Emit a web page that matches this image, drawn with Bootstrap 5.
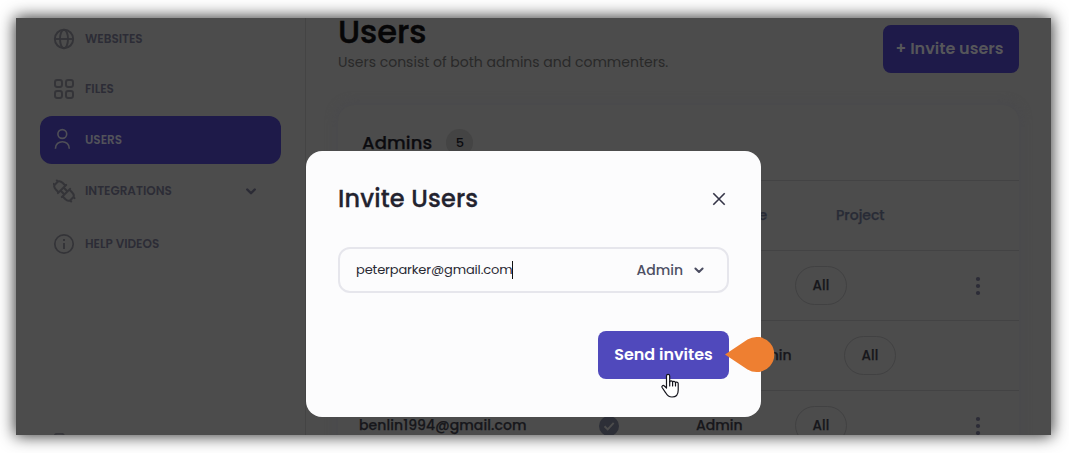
<!DOCTYPE html>
<html lang="en">
<head>
<meta charset="utf-8">
<meta name="viewport" content="width=device-width, initial-scale=1">
<title>Invite Users</title>
<link href="https://cdn.jsdelivr.net/npm/bootstrap@5.3.0/dist/css/bootstrap.min.css" rel="stylesheet">
<style>
body{font-family:Poppins,Inter,"Open Sans",sans-serif;background:#fff;height:453px;overflow:hidden;padding:18px 18px 18px 16px}
.app-frame{height:417px;background:#4c4c4c;box-shadow:0 0 15px 1px rgba(0,0,0,.8);overflow:hidden}
.side{width:290px;border-right:1px solid #444;padding:0 24px;margin-top:-3px;height:420px;overflow:hidden}
.side-link{height:48px;flex:none;padding:0 21px 0 13px;border-radius:12px;color:#2c2c36;font-size:12px;font-weight:600;letter-spacing:0;line-height:14px}
.side-link svg{width:24px;height:24px;margin-right:8px;flex:none}
.side-link.on{background:#1e1a49;color:#52525a}
.main{padding:0 32px}
.page-title{font-size:32px;font-weight:500;letter-spacing:0;line-height:36px;color:#060607;margin:-4px 0 0;-webkit-text-stroke:.5px #060607}
.page-sub{font-size:14px;line-height:20px;color:#292929;margin-top:2px}
.btn-inv{width:136px;height:48px;border-radius:8px;background:#1e1a49;color:#56565a;font-size:16px;font-weight:600;margin-top:7px;padding:0 3px 0 0}
.panel{margin-top:32px;height:360px;border-radius:16px;background:#4c4c4c;box-shadow:0 0 10px 3px #4a4a4d}
.panel-head{height:75px;padding-left:24px;gap:14px;color:#0b0b0f}
.panel-title{font-size:18px;font-weight:500;letter-spacing:.13px;line-height:20px;-webkit-text-stroke:.25px #0b0b0f}
.count{width:27px;height:27px;border-radius:50%;background:#444;font-size:13px;font-weight:500}
.line{height:70px;border-top:1px solid #434344;color:#17171b;font-size:14px;font-weight:500;-webkit-text-stroke:.25px currentColor}
.c-mail{width:239px;padding-left:21px;letter-spacing:.08px}
.c-check{width:119px;padding-left:21px}
.c-role{width:99px;white-space:nowrap}
.c-proj{width:171px}
.heads{color:#282b36}
.pill{width:52px;height:39px;border:1px solid #414142;border-radius:20px;font-size:13.5px;letter-spacing:.1px;padding-top:1px}
.invite{position:absolute;left:306px;top:151px;width:455px;height:266px;border-radius:16px;background:#fcfcfd;padding:32px;color:#23232f}
.invite h2{font-size:24px;font-weight:500;letter-spacing:.17px;line-height:32px;margin:0;-webkit-text-stroke:.3px #23232f}
.mail-field{height:46px;margin-top:32px;border:2px solid #e6e6ec;border-radius:12px;padding:0 22px 0 16px}
.mail-text{font-size:13px;letter-spacing:-.14px;color:#2a2a34;line-height:18px;border-right:1px solid #111}
.role-pick{font-size:14px;font-weight:500;color:#4e5064;gap:10px}
.btn-send{width:131px;height:48px;border-radius:8px;background:#5049bc;color:#fff;font-size:16px;font-weight:600;padding:0;margin-top:38px}
.drop{position:absolute;left:724px;top:336px}
.hand{position:absolute;left:660px;top:373px}
</style>
<script src="https://cdn.jsdelivr.net/npm/bootstrap@5.3.0/dist/js/bootstrap.bundle.min.js"></script>
</head>
<body>
<div class="app-frame d-flex">
  <nav class="side d-flex flex-column flex-shrink-0">
    <a class="side-link d-flex align-items-center text-decoration-none">
      <svg viewBox="0 0 24 24" fill="none" stroke="#343438" stroke-width="1.9"><circle cx="11" cy="12" r="9.2"/><ellipse cx="11" cy="12" rx="4" ry="9.2"/><path d="M2 12h18"/></svg><span>WEBSITES</span></a>
    <a class="side-link d-flex align-items-center text-decoration-none" style="margin-top:2px">
      <svg viewBox="0 0 24 24" fill="none" stroke="#343438" stroke-width="1.9"><rect x="2" y="3" width="7" height="7" rx="2.2"/><rect x="13" y="3" width="7" height="7" rx="2.2"/><rect x="2" y="14" width="7" height="7" rx="2.2"/><rect x="13" y="14" width="7" height="7" rx="2.2"/></svg><span>FILES</span></a>
    <a class="side-link on d-flex align-items-center text-decoration-none" style="margin-top:3px">
      <svg viewBox="0 0 24 24" fill="none" stroke="#4f4f57" stroke-width="1.6"><circle cx="9.3" cy="6" r="4.4"/><path d="M2.4 20.700c0-9.300 13.900-9.300 13.900 0"/></svg><span>USERS</span></a>
    <a class="side-link d-flex align-items-center text-decoration-none" style="margin-top:3px">
      <svg viewBox="0 0 24 24" fill="none" stroke="#343438" stroke-width="2" stroke-linecap="round" stroke-linejoin="round"><g transform="translate(11 12) rotate(-45)"><path d="M-5.800 -2.800H5.800M-4.800 -3V-6.500C-4.800 -9.500 -3.800 -10.500 -2.400 -11V-12.500M4.800 -3V-6.500C4.800 -9.500 3.800 -10.500 2.400 -11V-12.500M-2.400 -11H2.400M-5.800 2.800H5.800M-4.800 3V6.500C-4.800 9.500 -3.800 10.500 -2.400 11V12.500M4.800 3V6.500C4.800 9.500 3.800 10.500 2.400 11V12.500M-2.400 11H2.400M-2.200 -2.500V2.500M2.200 -2.500V2.500"/></g></svg><span>INTEGRATIONS</span>
      <svg viewBox="0 0 24 24" class="ms-auto me-0" style="width:18px;height:18px" fill="none" stroke="#2b2b35" stroke-width="3.2" stroke-linecap="round" stroke-linejoin="round"><path d="M7 10l5 5 5-5"/></svg></a>
    <a class="side-link d-flex align-items-center text-decoration-none" style="margin-top:5px">
      <svg viewBox="0 0 24 24" fill="none" stroke="#343438" stroke-width="1.7"><circle cx="11" cy="12" r="9.2"/><path d="M11 11v6M11 7v2" stroke-width="2"/></svg><span>HELP VIDEOS</span></a>
    <svg class="flex-shrink-0" style="margin:165px 0 0 14px" width="12" height="8" viewBox="0 0 12 8"><rect x=".8" y=".8" width="9" height="9" rx="2" fill="none" stroke="#37373b" stroke-width="1.8"/></svg>
  </nav>
  <main class="main flex-grow-1">
    <div class="d-flex justify-content-between align-items-start">
      <div><h1 class="page-title">Users</h1><div class="page-sub">Users consist of both admins and commenters.</div></div>
      <button class="btn btn-inv border-0">+ Invite users</button>
    </div>
    <section class="panel">
      <div class="panel-head d-flex align-items-center"><span class="panel-title">Admins</span><span class="count d-flex align-items-center justify-content-center">5</span></div>
      <div class="line heads d-flex align-items-center"><span class="c-mail"></span><span class="c-check"></span><span class="c-role" style="padding-left:41px">Role</span><span style="padding-left:41px">Project</span></div>
      <div class="line d-flex align-items-center"><span class="c-mail"></span><span class="c-check"></span><span class="c-role"></span><span class="c-proj"><span class="pill d-flex align-items-center justify-content-center">All</span></span>
        <svg width="24" height="24" viewBox="0 0 24 24" fill="#2c2c37"><circle cx="12" cy="5" r="2.1"/><circle cx="12" cy="12" r="2.1"/><circle cx="12" cy="19" r="2.1"/></svg></div>
      <div class="line d-flex align-items-center"><span class="c-mail"></span><span class="c-check"></span><span class="c-role" style="width:148px;padding-left:49px">Admin</span><span class="pill d-flex align-items-center justify-content-center">All</span></div>
      <div class="line d-flex align-items-center"><span class="c-mail">benlin1994@gmail.com</span><span class="c-check"><svg class="d-block" width="22" height="22" viewBox="0 0 22 22"><circle cx="11" cy="11" r="10" fill="#2d2f37"/><path d="M6.500 11.200l3.200 3.200 6-6.500" fill="none" stroke="#4c4c4c" stroke-width="2"/></svg></span><span class="c-role">Admin</span><span class="c-proj"><span class="pill d-flex align-items-center justify-content-center">All</span></span>
        <svg width="24" height="24" viewBox="0 0 24 24" fill="#2c2c37"><circle cx="12" cy="5" r="2.1"/><circle cx="12" cy="12" r="2.1"/><circle cx="12" cy="19" r="2.1"/></svg></div>
    </section>
  </main>
</div>
<div class="invite" role="dialog">
  <div class="d-flex justify-content-between align-items-center"><h2>Invite Users</h2>
    <svg width="20" height="20" viewBox="0 0 20 20" fill="none" stroke="#343447" stroke-width="1.6"><path d="M4.300 4.300l11.400 11.400M15.700 4.300L4.300 15.700"/></svg></div>
  <div class="mail-field d-flex align-items-center justify-content-between">
    <span class="mail-text">peterparker@gmail.com</span>
    <span class="role-pick d-flex align-items-center">Admin<svg width="12" height="12" viewBox="0 0 12 12" fill="none" stroke="#4a4c60" stroke-width="2" stroke-linecap="round" stroke-linejoin="round"><path d="M2.400 4.500L6 8l3.600-3.500"/></svg></span>
  </div>
  <div class="d-flex justify-content-end"><button class="btn btn-send border-0">Send invites</button></div>
</div>
<svg class="drop" width="52" height="38" viewBox="0 0 52 38"><path d="M1 18.500L23.500 3.500A17.600 17.600 0 1 1 23.500 33.500Z" fill="#ee7f31"/></svg>
<svg class="hand" width="21" height="27" viewBox="0 0 21 27"><path d="M6.500 15V3c0-2.200 3.200-2.200 3.200 0v6c0-1.500 2.900-1.500 2.900.3 0-1.400 2.900-1.200 2.900.6 0-1.300 2.700-1 2.700.7v6.600c0 4-2.200 6.800-6.200 6.800-3.500 0-4.900-1.700-6.300-4.200l-3.600-5.300c-.9-1.600 1.100-2.800 2.300-1.500z" fill="#fff" stroke="#14141c" stroke-width="1.2" stroke-linejoin="round"/><path d="M9.700 8.500v4.500M12.600 9.300V13M15.500 10v3" stroke="#14141c" stroke-width="1.2" stroke-linecap="round"/></svg>
</body>
</html>
